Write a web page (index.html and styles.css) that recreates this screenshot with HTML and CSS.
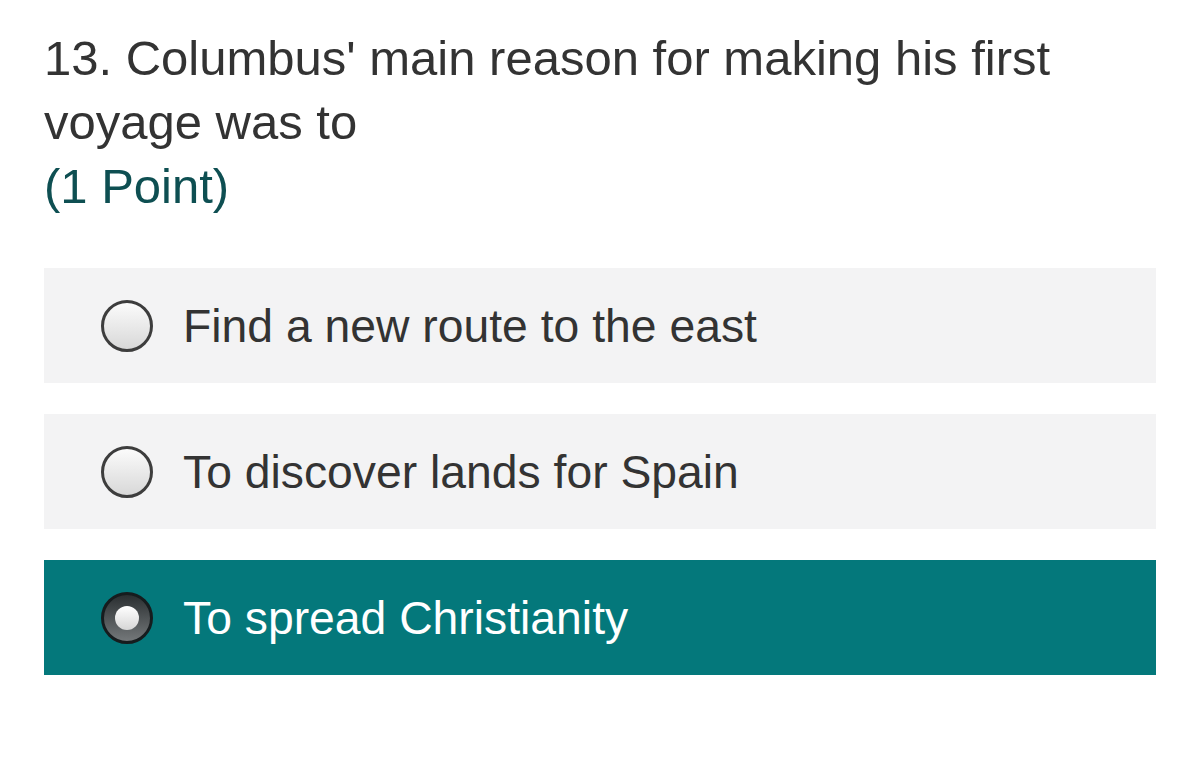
FILE: index.html
```html
<!DOCTYPE html>
<html lang="en">
<head>
<meta charset="utf-8">
<title>Question 13</title>
<link rel="stylesheet" href="styles.css">
</head>
<body>
<main class="question">
  <h1 class="q-title">13. Columbus' main reason for making his first voyage was to <span class="q-points">(1 Point)</span></h1>
  <div class="options">
    <label class="option">
      <span class="radio"></span>
      <span class="option-text">Find a new route to the east</span>
    </label>
    <label class="option">
      <span class="radio"></span>
      <span class="option-text">To discover lands for Spain</span>
    </label>
    <label class="option selected">
      <span class="radio checked"></span>
      <span class="option-text">To spread Christianity</span>
    </label>
  </div>
</main>
</body>
</html>
```
FILE: styles.css
```css
html, body {
  margin: 0;
  padding: 0;
  background: #ffffff;
}
body {
  font-family: "Liberation Sans", Arial, sans-serif;
  color: #333333;
}
.question {
  padding: 26px 44px 0 44px;
}
.q-title {
  margin: 0;
  font-weight: normal;
  font-size: 49px;
  line-height: 64px;
  color: #333333;
  max-width: 1080px;
}
.q-points {
  display: block;
  color: #0e4f52;
}
.options {
  margin-top: 50px;
  display: flex;
  flex-direction: column;
  gap: 31px;
}
.option {
  display: flex;
  align-items: center;
  height: 115px;
  padding-left: 57px;
  background: #f3f3f4;
  box-sizing: border-box;
}
.option.selected {
  background: #04787b;
}
.radio {
  width: 52px;
  height: 52px;
  box-sizing: border-box;
  border-radius: 50%;
  border: 3px solid #3d3d3d;
  background: linear-gradient(#fbfbfb, #d8d8d8);
  flex: none;
  display: flex;
  align-items: center;
  justify-content: center;
}
.radio.checked {
  border: 3px solid #161c1e;
  background: linear-gradient(#2a2f31, #74787a);
}
.radio.checked::after {
  content: "";
  width: 24px;
  height: 24px;
  border-radius: 50%;
  background: linear-gradient(#ffffff, #d6d6d6);
}
.option-text {
  margin-left: 30px;
  font-size: 46.3px;
  color: #333333;
}
.option.selected .option-text {
  color: #ffffff;
}
```
